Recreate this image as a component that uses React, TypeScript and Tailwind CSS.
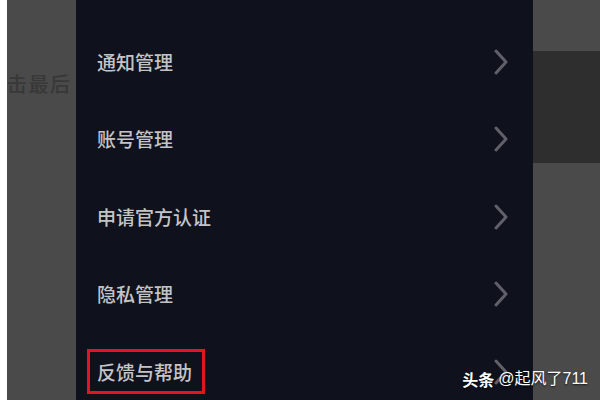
import React from 'react';

const items = ['通知管理', '账号管理', '申请官方认证', '隐私管理', '反馈与帮助'];

function Chevron() {
  return (
    <svg width="16" height="26" viewBox="0 0 16 26" fill="none">
      <polyline
        points="3,2 13,13 3,24"
        stroke="#5f606a"
        strokeWidth="3"
        strokeLinecap="round"
        strokeLinejoin="round"
      />
    </svg>
  );
}

export default function App() {
  return (
    <div
      className="relative flex h-[400px] w-[600px] overflow-hidden"
      style={{ fontFamily: '"Noto Sans CJK SC", "Noto Sans", sans-serif' }}
    >
      {/* left backdrop */}
      <div className="w-[76px] shrink-0 bg-[linear-gradient(to_right,#ffffff_7px,#4a4a4a_7px)] pt-[69px]">
        <div className="whitespace-nowrap pl-[7px] text-[20px] font-medium tracking-[1.5px] text-[#383838]">
          击最后
        </div>
      </div>

      {/* menu panel */}
      <div className="w-[457px] shrink-0 bg-[#0f121c] pt-[23px]">
        {items.map((label, i) => (
          <div key={label} className="flex h-[77.5px] items-center justify-between pr-[24px]">
            {i === items.length - 1 ? (
              <div className="ml-[11px] flex h-[45px] items-center border-[3px] border-[#e3151d] pl-[7px] pr-[10px] text-[19px] font-medium text-[#c4c4c8]">
                {label}
              </div>
            ) : (
              <div className="pl-[21px] text-[19px] font-medium text-[#c4c4c8]">{label}</div>
            )}
            <Chevron />
          </div>
        ))}
      </div>

      {/* right backdrop */}
      <div className="flex flex-1 flex-col bg-[#4a4a4a]">
        <div className="h-[51px]" />
        <div className="h-[112px] bg-[#2e2e2e]" />
      </div>

      {/* watermark */}
      <div className="absolute bottom-[9px] right-[12px] flex items-center gap-[4px] whitespace-nowrap text-[16px] text-white [text-shadow:0_1px_2px_rgba(0,0,0,0.7)]">
        <span className="font-bold">头条</span>
        <span style={{ fontFamily: '"Liberation Sans", "Noto Sans CJK SC", sans-serif' }}>@起风了711</span>
      </div>
    </div>
  );
}
